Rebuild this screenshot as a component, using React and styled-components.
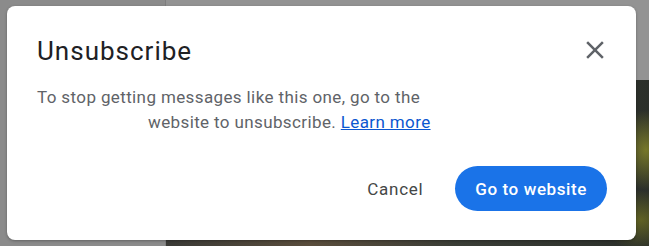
import React from 'react';
import styled, { createGlobalStyle } from 'styled-components';

const GlobalStyle = createGlobalStyle`
  html, body {
    margin: 0;
    padding: 0;
    background: #8c8c8c;
  }
  body {
    font-family: Roboto, "Liberation Sans", sans-serif;
  }
`;

const Page = styled.div`
  position: relative;
  width: 649px;
  height: 246px;
  overflow: hidden;
  display: grid;
  grid-template-columns: 166px 1fr;
`;

const SidePane = styled.div`
  background: #8b8b8b;
  border-right: 1px solid #7e7e7e;
`;

const MainPane = styled.div`
  display: grid;
  grid-template-rows: 80px 1fr;
`;

const TopStrip = styled.div`
  background: #939393;
`;

const Photo = styled.div`
  background:
    radial-gradient(ellipse 30px 40px at 480px 70px, rgba(150, 150, 40, 0.7), transparent),
    radial-gradient(ellipse 40px 30px at 475px 140px, rgba(130, 130, 30, 0.6), transparent),
    linear-gradient(90deg, #3a3a36 0%, #5a4d3c 30%, #3a3d36 60%, #2b2f2a 100%);
`;

const Dialog = styled.div`
  position: absolute;
  left: 7px;
  top: 6px;
  width: 629px;
  height: 234px;
  box-sizing: border-box;
  background: #ffffff;
  border-radius: 8px;
  box-shadow: 0 1px 3px rgba(0, 0, 0, 0.3);
  padding: 25px 29px 29px 30px;
  display: flex;
  flex-direction: column;
`;

const Header = styled.div`
  display: flex;
  align-items: center;
  justify-content: space-between;
`;

const Title = styled.h2`
  margin: 0;
  font-size: 26px;
  font-weight: 400;
  letter-spacing: 1px;
  line-height: 40px;
  color: #202124;
`;

const CloseButton = styled.button`
  width: 36px;
  height: 36px;
  margin-right: -6px;
  margin-top: -2px;
  border: none;
  background: none;
  padding: 0;
  display: flex;
  align-items: center;
  justify-content: center;
  color: #5f6368;
  cursor: pointer;
`;

const Body = styled.p`
  margin: 14px 0 0;
  font-size: 17px;
  letter-spacing: 0.38px;
  line-height: 25px;
  color: #5f6368;
  width: 440px;
`;

const Spacer = styled.span`
  display: inline-block;
  width: ${(p) => p.$w}px;
`;

const Link = styled.a`
  color: #0b57d0;
  text-decoration: underline;
`;

const Footer = styled.div`
  margin-top: auto;
  display: flex;
  justify-content: flex-end;
  align-items: center;
  gap: 8px;
`;

const Button = styled.button`
  height: 45px;
  border: none;
  border-radius: 23px;
  font-family: Roboto, "Liberation Sans", sans-serif;
  font-size: 17px;
  letter-spacing: ${(p) => (p.$primary ? '0.6px' : '0.7px')};
  font-weight: ${(p) => (p.$primary ? 500 : 400)};
  padding: ${(p) => (p.$primary ? '0 20px' : '0 24px')};
  background: ${(p) => (p.$primary ? '#1a73e8' : 'transparent')};
  color: ${(p) => (p.$primary ? '#ffffff' : '#444746')};
  cursor: pointer;
`;

export default function App() {
  return (
    <>
      <GlobalStyle />
      <Page>
        <SidePane />
        <MainPane>
          <TopStrip />
          <Photo />
        </MainPane>
        <Dialog role="dialog">
          <Header>
            <Title>Unsubscribe</Title>
            <CloseButton aria-label="Close">
              <svg width="30" height="30" viewBox="0 0 24 24" fill="currentColor">
                <path d="M19 6.41 17.59 5 12 10.59 6.41 5 5 6.41 10.59 12 5 17.59 6.41 19 12 13.41 17.59 19 19 17.59 13.41 12z" />
              </svg>
            </CloseButton>
          </Header>
          <Body>
            To stop getting messages like this one, go to the<br />
            <Spacer $w={111} />website to unsubscribe. <Link href="#">Learn more</Link>
          </Body>
          <Footer>
            <Button>Cancel</Button>
            <Button $primary>Go to website</Button>
          </Footer>
        </Dialog>
      </Page>
    </>
  );
}
